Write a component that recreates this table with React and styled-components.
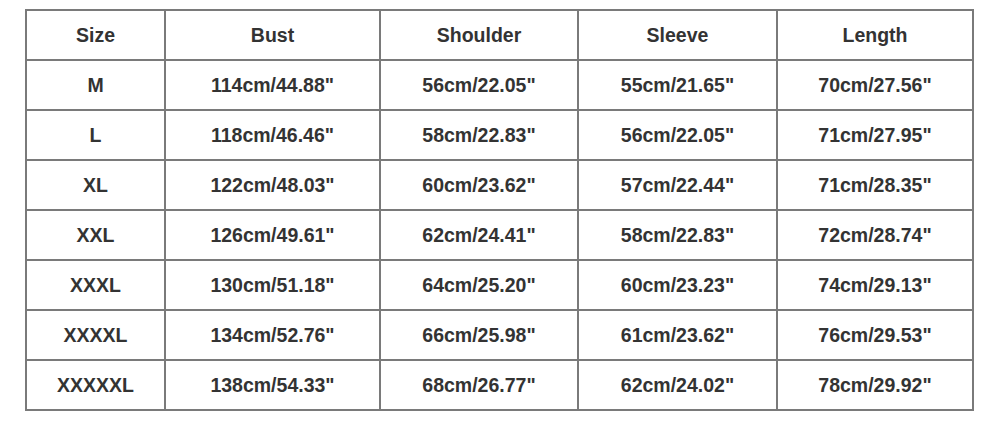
import React from "react";
import styled, { createGlobalStyle } from "styled-components";

const Global = createGlobalStyle`
  html, body {
    margin: 0;
    padding: 0;
    background: #fff;
  }
`;

const headers = ["Size", "Bust", "Shoulder", "Sleeve", "Length"];

const rows = [
  ["M", "114cm/44.88\"", "56cm/22.05\"", "55cm/21.65\"", "70cm/27.56\""],
  ["L", "118cm/46.46\"", "58cm/22.83\"", "56cm/22.05\"", "71cm/27.95\""],
  ["XL", "122cm/48.03\"", "60cm/23.62\"", "57cm/22.44\"", "71cm/28.35\""],
  ["XXL", "126cm/49.61\"", "62cm/24.41\"", "58cm/22.83\"", "72cm/28.74\""],
  ["XXXL", "130cm/51.18\"", "64cm/25.20\"", "60cm/23.23\"", "74cm/29.13\""],
  ["XXXXL", "134cm/52.76\"", "66cm/25.98\"", "61cm/23.62\"", "76cm/29.53\""],
  ["XXXXXL", "138cm/54.33\"", "68cm/26.77\"", "62cm/24.02\"", "78cm/29.92\""],
];

const App = () => {
  return (
    <Page>
      <Global />
      <Chart>
        {headers.map((h) => (
          <Cell key={h}>{h}</Cell>
        ))}
        {rows.map((row) =>
          row.map((value, i) => <Cell key={row[0] + i}>{value}</Cell>)
        )}
      </Chart>
    </Page>
  );
};

const Page = styled.div`
  padding: 9px 0 0 25px;
  width: 1000px;
  height: 421px;
  box-sizing: border-box;
`;

const Chart = styled.div`
  display: grid;
  grid-template-columns: 137px 213px 196px 197px 194px;
  grid-auto-rows: 48px;
  gap: 2px;
  padding: 2px;
  width: max-content;
  background-color: #7a7a7a;
`;

const Cell = styled.div`
  background-color: #fff;
  display: flex;
  align-items: center;
  justify-content: center;
  font-family: "Liberation Sans", Arial, sans-serif;
  font-weight: bold;
  font-size: 19.5px;
  color: #333;
`;

export default App;
